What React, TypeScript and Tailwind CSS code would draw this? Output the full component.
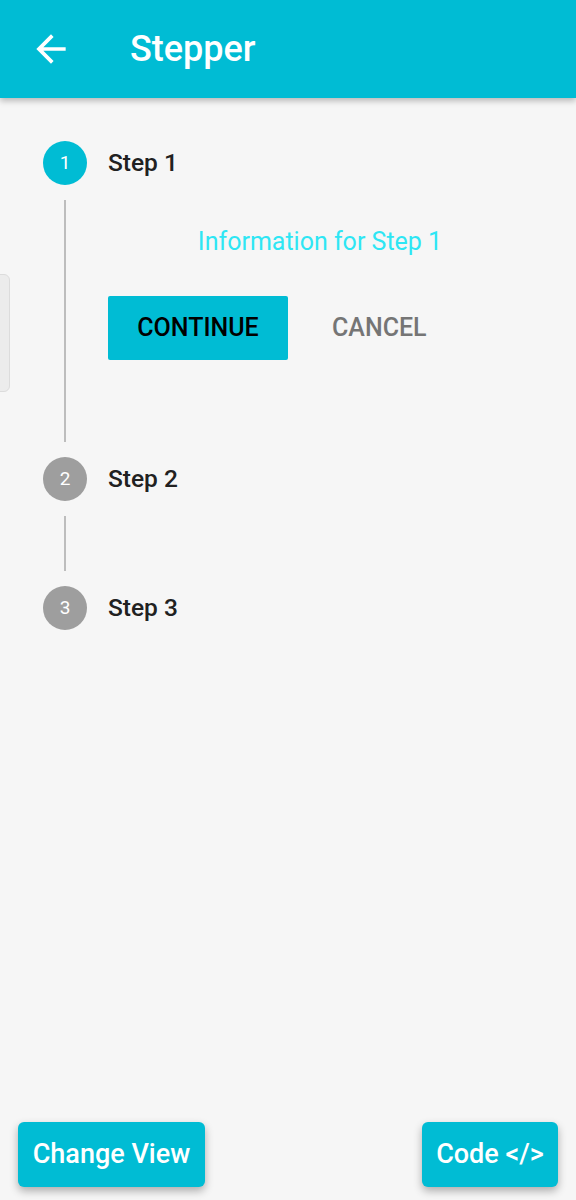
import React from 'react'

const font = { fontFamily: 'Roboto, "Noto Sans", sans-serif' }

function StepCircle({ n, active }: { n: number; active?: boolean }) {
  return (
    <div
      className={`w-[44px] h-[44px] rounded-full flex items-center justify-center text-white text-[19px] shrink-0 ${
        active ? 'bg-[#00bcd4]' : 'bg-[#9e9e9e]'
      }`}
    >
      {n}
    </div>
  )
}

function StepHeader({ n, active }: { n: number; active?: boolean }) {
  return (
    <div className="flex items-center h-[44px]">
      <StepCircle n={n} active={active} />
      <span className="ml-[21px] text-[24.5px] font-medium text-[#212121]">Step {n}</span>
    </div>
  )
}

export default function App() {
  return (
    <div style={font} className="relative min-h-[1200px] bg-[#f6f6f6] flex flex-col">
      {/* App bar */}
      <header className="h-[98px] bg-[#00bcd4] flex items-center shadow-[0_3px_6px_rgba(0,0,0,0.25)] z-10">
        <svg viewBox="0 0 24 24" className="w-[44px] h-[44px] ml-[29px] fill-white">
          <path d="M20 11H7.83l5.59-5.59L12 4l-8 8 8 8 1.41-1.41L7.83 13H20v-2z" />
        </svg>
        <h1 className="ml-[57px] text-[36px] font-medium text-white">Stepper</h1>
      </header>

      {/* side handle */}
      <div className="absolute left-[-10px] top-[274px] w-[20px] h-[118px] rounded-[6px] bg-[#ececec] border border-[#dcdcdc]" />

      {/* Stepper */}
      <div className="pl-[43px] pt-[43px] flex-1">
        <StepHeader n={1} active />
        <div className="flex py-[15px]">
          <div className="w-[44px] flex justify-center">
            <div className="w-[2px] h-[242px] bg-[#bdbdbd]" />
          </div>
          <div className="ml-[21px] w-[424px]">
            <p className="mt-[28px] text-center text-[25px] leading-[28px] text-[#2ee6f4]">
              Information for Step 1
            </p>
            <div className="mt-[40px] flex items-center">
              <button className="w-[180px] h-[64px] bg-[#00bcd4] rounded-[2px] text-[25px] font-medium text-black">
                CONTINUE
              </button>
              <button className="ml-[44px] text-[25px] font-medium text-[#757575]">CANCEL</button>
            </div>
          </div>
        </div>
        <StepHeader n={2} />
        <div className="flex py-[15px]">
          <div className="w-[44px] flex justify-center">
            <div className="w-[2px] h-[55px] bg-[#bdbdbd]" />
          </div>
        </div>
        <StepHeader n={3} />
      </div>

      {/* Bottom actions */}
      <div className="flex justify-between px-[18px] pb-[13px]">
        <button className="w-[187px] h-[65px] rounded-[6px] bg-[#00bcd4] text-white text-[27px] font-medium shadow-[0_4px_8px_rgba(0,0,0,0.3)]">
          Change View
        </button>
        <button className="w-[136px] h-[65px] rounded-[6px] bg-[#00bcd4] text-white text-[27px] font-medium shadow-[0_4px_8px_rgba(0,0,0,0.3)]">
          Code &lt;/&gt;
        </button>
      </div>
    </div>
  )
}
